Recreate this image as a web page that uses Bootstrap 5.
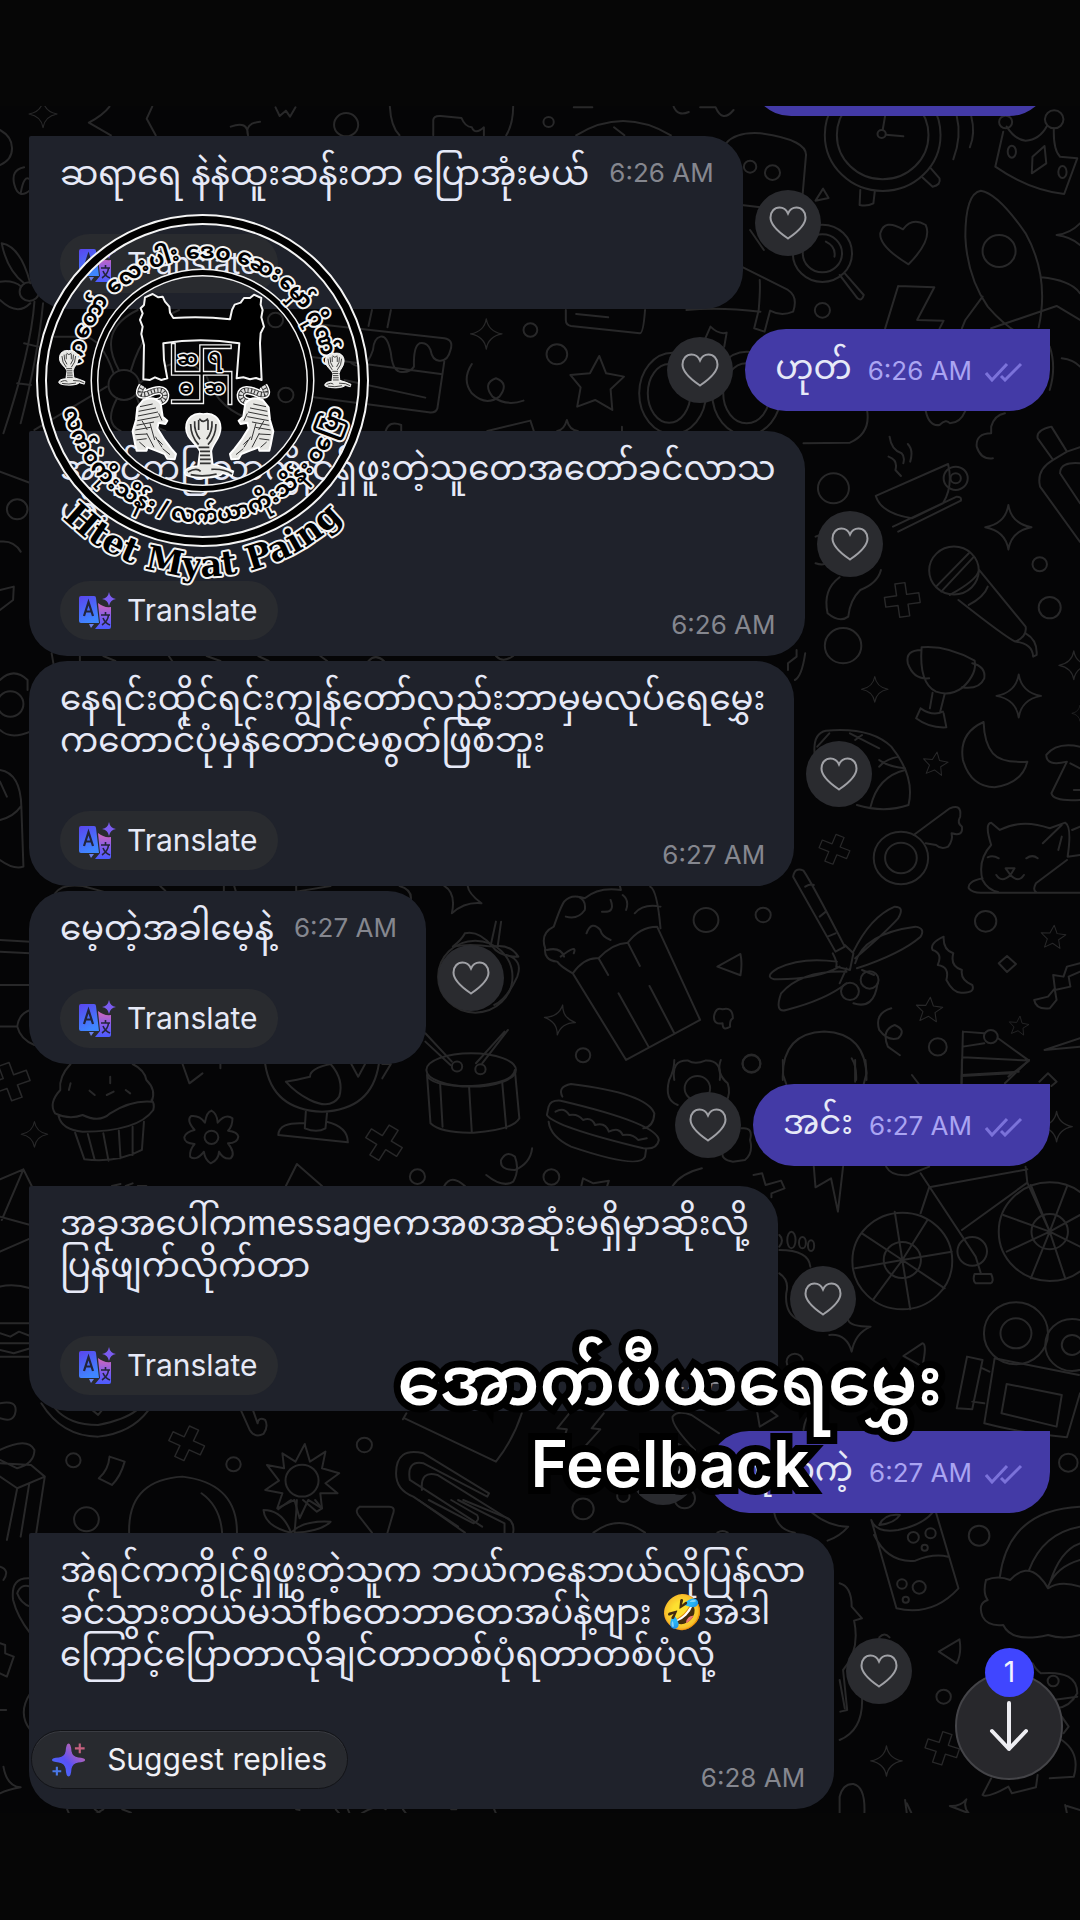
<!DOCTYPE html>
<html lang="my">
<head>
<meta charset="utf-8">
<meta name="viewport" content="width=device-width, initial-scale=1">
<title>Chat</title>
<link rel="stylesheet" href="https://cdn.jsdelivr.net/npm/bootstrap@5.3.0/dist/css/bootstrap.min.css">
<style>
:root{--ink:#e6e9f7;--in:#1f222b;--out:#433aa6;--chip:#292b2f;--latin:Inter,"Noto Sans",sans-serif;--my:Inter,"Noto Sans Myanmar","Padauk",serif}
body{background:#060606;color:var(--ink);font-family:var(--latin);padding:106px 0 0}
.chat{background:#050506;padding-bottom:4px}
.wall{z-index:0;left:0;top:0;width:100%;height:100%}
.wall *{vector-effect:non-scaling-stroke}
.thread{z-index:1;padding:0 30px 0 29px;gap:20px}
.run{gap:5px}
.msg{gap:12px}
.bub{background:var(--in);border-radius:38px;padding:16px 29px 16px 31px;white-space:nowrap}
.first{border-top-left-radius:2px}
.sent{background:var(--out);border-radius:41px 0 41px 41px;height:82px;padding:17px 27px 0 30px}
.cut{width:300px;margin-top:-72px}
.txt{font-family:var(--my);font-size:34px;line-height:42px;margin:0}
.l1{margin-bottom:40px}.l2{margin-bottom:50px}.l3{margin-bottom:59px}
.when{font-size:26px;line-height:42px;color:#85878f}
.sent .when{color:#aaa4f2;margin-right:13px}
.foot{height:59px}
.foot .when{line-height:30px}
.chip{background:var(--chip);color:var(--ink);border:0;border-radius:30px;height:59px;padding:0 20px 0 19px;gap:10px;font-size:30px}
.like{background:#2a2b2f;border:0;border-radius:50%;width:66px;height:66px;padding:0;flex:none}
.over{z-index:3}
.suggest{z-index:2;left:31px;bottom:24px;height:59px;width:317px;padding:0 20px;gap:22px;border-radius:30px;background:#282a2f;border:1px solid #121317;color:#f1f1f6;font-size:30px;white-space:nowrap;box-shadow:inset 0 1px 0 #3a3c42}
.down{z-index:2;right:17px;bottom:33px;width:108px;height:108px;border-radius:50%;background:#28282c;border:2px solid #444448;padding:0}
.unread{z-index:1;left:28px;top:-26px;width:49px;height:49px;border-radius:50%;background:#4046ff;color:#f2f2ff;font-size:28px;line-height:49px}
.emblem{left:30px;top:104px;width:346px;height:386px}
.caption{left:260px;right:0;top:1233px;font:600 68px/82px var(--my);color:#fff;-webkit-text-stroke:14px #000;paint-order:stroke fill;stroke-linejoin:round}
.caption span{font-size:64px}
</style>
<script src="https://cdn.jsdelivr.net/npm/bootstrap@5.3.0/dist/js/bootstrap.bundle.min.js"></script>
</head>
<body>
<svg width="0" height="0" class="position-absolute" aria-hidden="true">
<defs>
<linearGradient id="ga" x1="0" y1="1" x2="1" y2="0"><stop offset="0" stop-color="#3d7cff"/><stop offset=".45" stop-color="#5a50f5"/><stop offset="1" stop-color="#f0708f"/></linearGradient>
<linearGradient id="gb" x1="0" y1="0" x2="0" y2="1"><stop offset="0" stop-color="#d468b8"/><stop offset=".6" stop-color="#7a5cf0"/><stop offset="1" stop-color="#4a5cff"/></linearGradient>
<linearGradient id="gc" x1="0" y1="0" x2=".4" y2="1"><stop offset="0" stop-color="#5a44ee"/><stop offset="1" stop-color="#3f86ff"/></linearGradient>
<symbol id="heart" viewBox="0 0 38 34"><path d="M19 32.500C14 29 1.500 21 1.500 11.500C1.500 5.500 5.500 1.500 10.500 1.500C14.500 1.500 17.500 4 19 7.500C20.500 4 23.500 1.500 27.500 1.500C32.500 1.500 36.500 5.500 36.500 11.500C36.500 21 24 29 19 32.500Z" fill="none" stroke="#a0a1a6" stroke-width="2"/></symbol>
<symbol id="tr" viewBox="0 0 38 38"><path d="M2 4H15Q17 4 17 6L20 31H2Q0 31 0 29V6Q0 4 2 4Z" fill="url(#gc)"/><path d="M10 32H15L12 36Z" fill="#6b7ee8"/><path d="M19 11Q25 16 32 15V35Q32 37 30 37H16L21 31Z" fill="url(#gb)"/><path d="M5 24L9.500 10L14 24M6.500 19.500H12.500" fill="none" stroke="#22243a" stroke-width="2.200"/><path d="M22 23H31M26.500 20V23M23 33Q29 29 29.500 23M24 26Q26 31 31 33" fill="none" stroke="#22243a" stroke-width="1.600"/><path d="M30 0Q31 6 37 7Q31 8 30 14Q29 8 23 7Q29 6 30 0Z" fill="#7b5cf0"/></symbol>
<symbol id="ai" viewBox="0 0 34 34"><path d="M17 0Q19.500 0 20 8Q21 13.500 27 14.500Q34 15 34 17Q34 19 27 19.500Q21 20.500 20 26Q19.500 34 17 34Q14.500 34 14 26Q13 20.500 7 19.500Q0 19 0 17Q0 15 7 14.500Q13 13.500 14 8Q14.500 0 17 0Z" fill="url(#ga)"/><path d="M28.500 0V10M23.500 5H33.500" stroke="#c4607f" stroke-width="2.200"/><path d="M5 24V33M.500 28.500H9.500" stroke="#4a78e8" stroke-width="2.200"/></symbol>
<symbol id="ticks" viewBox="0 0 38 20"><path d="M1 11L7 18L22 2M16 14L20 18L36 2" fill="none" stroke="#7b72da" stroke-width="3"/></symbol>
<path id="spark" d="M0-24Q3-4 24 0Q3 4 0 24Q-3 4-24 0Q-3-4 0-24Z"/>
<path id="star" d="M0-24L7-8L24-7L11 4L15 21L0 12L-15 21L-11 4L-24-7L-7-8Z"/>
<path id="plus" d="M-7-24H7V-7H24V7H7V24H-7V7H-24V-7H-7Z"/>
<g id="cobra"><path d="M60 0C88-6 112 12 112 42C112 74 88 88 84 112L88 150L120 160L150 172L146 186L118 178Q110 190 64 192Q4 190 4 176Q6 158 44 156L50 112C36 84 8 74 8 42C8 12 32-6 60 0Z" fill="#e9e9e6" stroke="#fff" stroke-width="5"/><path d="M22 30Q22 66 46 92M98 30Q98 66 74 92M34 22Q32 54 50 76M86 22Q88 54 70 76M46 18V48M74 18V48M48 14Q60 30 74 14M46 100H78M50 112H80M50 124H80M50 136H82M50 148H82M14 174Q40 160 52 172M84 166Q124 164 146 180M22 182Q60 190 100 180" fill="none" stroke="#333" stroke-width="5"/></g>
<g id="tiger"><path d="M338 528Q318 560 350 552Q400 528 405 555Q406 576 370 578" fill="none" stroke="#fff" stroke-width="26"/><path d="M338 528Q318 560 350 552Q400 528 405 555Q406 576 370 578" fill="none" stroke="#333" stroke-width="17"/><path d="M338 528Q318 560 350 552Q400 528 405 555Q406 576 370 578" fill="none" stroke="#ddd" stroke-width="12" stroke-dasharray="7 3"/><path d="M340 570Q372 556 392 580L398 620L412 632L406 642L386 638L382 655L404 690L424 716L438 732L434 748L412 746L404 732L378 722L352 712L350 722L320 722L316 706L308 664L318 630L322 592Z" fill="#e6e6e3" stroke="#fff" stroke-width="6" stroke-linejoin="round"/><path d="M330 590L368 582M326 604L378 594M324 618L384 606M322 632L386 620M320 646L372 636M316 660L362 652M316 674L352 672M320 690L350 686M336 632L352 660M360 640L374 690M350 670L372 712M376 680L396 712M384 690L398 704M328 696L346 712M398 716L420 734M386 610L396 632" fill="none" stroke="#333" stroke-width="3"/></g>
</defs>
</svg>

<main class="chat position-relative overflow-hidden">
<svg class="wall position-absolute" viewBox="0 106 1080 1707" preserveAspectRatio="xMidYMin slice" fill="none" stroke="#282829" stroke-width="2" stroke-linejoin="round" stroke-linecap="round" aria-hidden="true">
<g transform="translate(0 90) scale(.3444 .3333)">
<use href="#spark" transform="translate(125 72) scale(1.700)"/><path d="M318 50Q300 75 258 98L322 136M442 50L426 86L452 136M670 110Q720 90 720 136M755 95Q710 100 720 136M800 52L812 78L830 62L842 80L858 52M1132 50Q1135 110 1160 136M1490 50Q1490 100 1470 136M1258 136V90Q1260 76 1280 78L1340 84Q1350 110 1370 112Q1380 136 1405 112V136M0 120Q35 140 35 175T0 225M70 232Q30 240 42 285T88 300M60 310Q70 250 88 270"/><circle cx="1005" cy="104" r="35"/>
<path d="M5 460Q60 470 88 580M5 460Q20 540 70 580M0 575Q40 570 62 590M0 630Q50 680 88 640M100 635Q90 780 10 1030M125 640Q110 800 60 1000M70 760L110 770M50 880L90 885"/><circle cx="85" cy="605" r="28"/>
<circle cx="360" cy="885" r="45"/><path d="M345 840Q280 720 400 660M380 842Q420 700 520 660M405 880Q520 780 580 840M340 925Q300 1000 350 1023M395 915Q420 1000 480 1023M130 740H230Q290 730 330 850M310 890L100 1020M600 860Q640 980 780 1000"/><circle cx="800" cy="690" r="22"/><circle cx="830" cy="915" r="22"/>
<path d="M900 700L1290 745Q1318 750 1308 780Q1300 815 1275 812Q1255 810 1250 780Q1240 755 1218 760Q1200 770 1202 830Q1190 850 1160 845Q1140 840 1135 790Q1125 735 1105 740Q1085 745 1083 780Q1060 850 1020 820M900 800L1280 852M1290 815L1270 955Q1265 970 1245 967L900 920M1000 870L1235 923M1080 660L1070 708M1135 660L1125 712"/><use href="#spark" transform="translate(1412 732) scale(1.900)"/><circle cx="1540" cy="720" r="20"/><path d="M1370 822Q1340 870 1370 910Q1410 950 1450 920Q1480 880 1440 865Q1400 880 1430 920Q1470 950 1520 932M1120 1023Q1130 990 1165 1005V1023M1415 1023L1540 992L1550 1023"/>
<circle cx="50" cy="1258" r="30"/><path d="M0 1145L90 1180M0 1355Q40 1350 60 1385M0 1500L40 1490L38 1530L0 1560"/>
</g>
<g transform="translate(540 90) scale(.3444 .3333)">
<path d="M98 52H152M388 50Q400 80 432 66M465 52H510Q530 100 562 60M105 136Q240 50 380 136M215 112L245 136"/><circle cx="25" cy="96" r="15"/>
<path d="M540 160Q570 125 640 130Q780 150 772 200L762 320M585 345L640 352M610 420L650 480M585 530L720 600Q750 620 735 665Q700 680 668 662L652 725L622 715L635 660Q640 600 638 570M425 660Q520 650 640 665M75 660V690Q75 705 90 708L290 730Q300 730 305 660M105 672L198 682"/><circle cx="610" cy="230" r="18"/><circle cx="675" cy="248" r="22"/>
<circle cx="995" cy="135" r="168"/><circle cx="995" cy="135" r="133"/><circle cx="992" cy="132" r="12"/><path d="M1002 78L995 120M1004 134L1055 139M930 300L928 345Q950 350 968 340L972 305M1110 262L1140 290Q1165 285 1160 265L1135 235M1210 78Q1225 140 1200 208M1252 78Q1265 130 1248 172"/>
<path d="M1355 110Q1380 150 1410 152Q1450 150 1472 108M1345 125L1322 230Q1420 300 1522 312L1560 205M1492 115Q1490 180 1510 200L1560 205M1465 168L1430 200L1428 250L1470 220Z"/><circle cx="1352" cy="96" r="19"/><circle cx="1493" cy="88" r="27"/><ellipse cx="1370" cy="185" rx="12" ry="18"/><ellipse cx="1517" cy="246" rx="12" ry="18"/>
<path d="M822 296L800 332L838 324Z"/><circle cx="820" cy="490" r="86"/><circle cx="820" cy="490" r="57"/><path d="M830 455Q860 470 855 500M870 555L922 625Q935 635 940 615L885 550"/>
<path d="M1070 523Q985 470 988 430Q1000 385 1054 418Q1080 380 1120 405Q1140 450 1070 523Z"/><path d="M1280 302Q1330 310 1410 430Q1480 560 1448 712M1280 302Q1235 310 1235 440Q1240 560 1300 650Q1350 710 1400 735M1285 620L1235 690L1225 715M1455 562Q1540 570 1568 610M1310 715L1500 648L1568 690"/><circle cx="1333" cy="483" r="48"/><path d="M1500 435Q1540 430 1568 400M1500 435Q1540 440 1568 465"/>
<path d="M1040 588L1145 592L1095 690L1172 692L1160 716M1040 588L1002 716"/><circle cx="820" cy="661" r="22"/>
<circle cx="49" cy="793" r="30"/><path d="M172 798L192 850L244 860L205 898L210 960L160 930L108 950L118 892L88 855L145 850Z"/><ellipse cx="385" cy="910" rx="97" ry="122"/><ellipse cx="375" cy="910" rx="62" ry="88"/><ellipse cx="600" cy="910" rx="100" ry="125"/><ellipse cx="600" cy="910" rx="68" ry="90"/><path d="M480 745L495 710Q520 735 542 728L535 770M950 963Q960 1030 900 1058L765 1060M1120 963Q1130 1010 1160 1005Q1180 985 1190 1000Q1220 1000 1235 963M1310 1030V1010Q1320 975 1350 970M1310 1030Q1265 1030 1268 1070Q1280 1110 1315 1105M1515 805Q1550 810 1568 830M1480 770Q1500 830 1480 900M50 1023Q70 1020 78 990Q85 1020 110 1023M238 1010V1023"/>
<circle cx="852" cy="1195" r="45"/><path d="M1015 1040Q1020 1080 1050 1090Q1060 1100 1055 1120M1068 1062Q1085 1080 1075 1115M1012 1100Q1040 1110 1032 1140L1048 1158M975 1218L1185 1122Q1200 1190 1170 1240L1080 1285Q990 1270 975 1218ZM1025 1310L1210 1220Q1225 1220 1222 1232L1040 1325"/><circle cx="1207" cy="1165" r="35"/><circle cx="1207" cy="1165" r="15"/>
<path d="M1445 1045Q1440 1020 1485 1010L1530 1085L1490 1110ZM1530 1085L1568 1072M1490 1110Q1440 1140 1452 1190L1568 1356M1510 1150Q1510 1115 1568 1120M1510 1150L1568 1240"/><use href="#spark" transform="translate(1360 1312) scale(2.800)"/><circle cx="1451" cy="1423" r="21"/><circle cx="1480" cy="1553" r="32"/><circle cx="1202" cy="1442" r="72"/><path d="M1150 1490L1245 1390M1165 1505L1260 1400M1190 1515Q1270 1470 1275 1440M1275 1440L1410 1610Q1415 1640 1380 1655Q1350 1640 1215 1530M1245 1545Q1290 1520 1300 1490M1410 1630Q1445 1650 1442 1695L1432 1700Q1430 1660 1380 1655"/><use href="#plus" transform="translate(1052 1530) rotate(-8) scale(2.100)"/><path d="M800 1340Q820 1330 838 1335M800 1420Q830 1430 845 1410M990 1440Q980 1480 930 1500Q900 1530 895 1580Q870 1600 835 1570Q820 1500 870 1462"/>
</g>
<g transform="translate(0 600) scale(.3444 .3333)">
<path d="M150 160L155 190M232 168V183M300 168L335 183M490 168L500 183M600 168L640 183M750 168L780 183M930 168L950 183M1070 183Q1090 160 1115 183M1440 168Q1460 190 1490 168M0 240Q40 200 80 240V270M0 390Q30 420 88 395M0 510Q60 520 62 620L68 800Q40 810 0 780M0 660Q40 650 60 620M0 545L20 590M0 1020L88 1025M0 1055L88 1060M0 1155H88M0 1280H50M50 1280Q55 1240 88 1230M50 1280Q60 1320 100 1335"/><circle cx="30" cy="312" r="38"/>
<path d="M160 880Q180 850 240 858L300 875M465 858L480 872M650 858V875M680 858L685 875M860 858V875L960 858M1160 858Q1200 870 1192 905M1290 858Q1325 880 1312 940Q1350 905 1398 910Q1360 880 1358 858"/>
<path d="M1440 965L1425 1035M1455 965L1445 1040M1350 1000Q1390 990 1430 1040Q1480 1030 1505 1070Q1450 1070 1430 1040M1350 1000Q1340 1020 1315 1040Q1360 1030 1430 1040M1470 1065Q1520 1080 1502 1130Q1470 1200 1435 1215"/><circle cx="1380" cy="1130" r="108"/>
<ellipse cx="1368" cy="1410" rx="130" ry="50"/><path d="M1235 1300L1312 1385M1235 1325L1308 1395M1475 1290L1400 1390M1465 1295L1382 1390"/><circle cx="1327" cy="1400" r="15"/><circle cx="1395" cy="1408" r="15"/>
</g>
<g transform="translate(540 600) scale(.3444 .3333)">
<circle cx="880" cy="137" r="53"/><path d="M745 150V170L720 190V210M770 160Q760 230 740 240"/><use href="#spark" transform="translate(972 268) scale(1.600)"/><use href="#spark" transform="translate(1390 288) scale(2.700)"/><use href="#spark" transform="translate(1550 196) scale(1.800)"/><use href="#spark" transform="translate(1568 340) scale(1)"/>
<path d="M1108 142Q1180 135 1262 182Q1270 220 1228 262Q1190 290 1150 275Q1100 250 1108 142ZM1108 150Q1060 150 1068 190Q1085 240 1130 235M1255 190Q1295 200 1290 235Q1275 270 1225 262M1140 278L1132 325M1175 282L1162 335M1105 325Q1140 350 1170 335M1105 325L1092 355Q1130 385 1180 382L1172 340"/>
<path d="M798 470Q790 400 830 392Q960 380 1020 440Q1090 530 1070 615Q1000 640 920 615M985 480Q1010 500 1060 505M960 620Q980 530 1060 510M1040 470Q1000 480 985 500M805 440L840 400M900 400L985 445M915 420L935 405"/>
<use href="#star" transform="translate(1148 492) rotate(8) scale(1.500)"/><path d="M1288 366Q1215 400 1228 480Q1250 560 1320 562Q1400 550 1415 485Q1340 490 1315 460Q1290 430 1288 366ZM1568 440Q1500 425 1470 465Q1470 500 1530 485L1485 580Q1490 605 1568 600M1540 490L1568 505M1550 570H1568"/>
<circle cx="1048" cy="774" r="79"/><circle cx="1048" cy="774" r="46"/><path d="M1085 705L1190 625Q1225 610 1220 650Q1210 670 1225 680Q1230 710 1195 700Q1200 720 1185 740Q1165 750 1150 735L1120 730"/><use href="#plus" transform="translate(855 748) rotate(22) scale(1.800)"/>
<path d="M1310 735Q1290 670 1310 668L1335 690Q1400 655 1480 685L1525 668Q1545 680 1532 770L1568 765M1310 735Q1270 780 1285 840Q1300 870 1330 876M1285 835Q1240 845 1245 865Q1255 878 1280 878H1568M1460 730L1515 675M1505 750L1515 710M1530 780L1440 850Q1430 870 1440 876M1300 772Q1315 765 1332 775M1412 775Q1430 762 1445 775M1352 805H1378L1366 825ZM1325 825Q1340 850 1366 825Q1390 850 1405 825M1545 690L1568 680"/>
<path d="M95 1120Q60 1100 50 1085Q10 1080 15 1045Q0 1000 40 980Q60 920 70 905Q90 880 130 895Q170 860 235 870L232 858M350 985Q340 870 320 860M95 1120Q130 1070 170 1075Q210 1030 255 1028Q290 980 340 980L465 1260L250 1380ZM170 1075L198 1125M255 1028L290 1098M228 1180L315 1340M318 1158L390 1300M20 1050Q60 1040 70 1070M60 1070Q110 1030 98 1060M135 1000Q150 960 175 990Q180 1010 205 1020M180 935Q220 940 205 900M240 885Q260 900 250 930M275 940Q300 910 350 920M75 950Q110 960 130 930Q135 900 110 890"/>
<circle cx="482" cy="960" r="36"/><circle cx="648" cy="945" r="22"/><path d="M735 830Q740 800 765 812Q790 850 885 1040L858 1055ZM770 860Q785 850 795 855M812 950L830 935M835 1010L858 1000M850 1060Q865 1090 860 1100L900 1110L910 1060L885 1035M862 1085Q760 1070 690 1105Q650 1130 680 1138Q800 1140 870 1100M890 1115Q760 1110 700 1180Q680 1240 715 1230Q830 1200 890 1150M910 1055Q960 950 1030 920Q1060 920 1040 955Q1000 1000 915 1075M915 1090Q940 1000 1090 980Q1120 985 1105 1010Q1050 1060 920 1105M870 1150L890 1105M935 1110L970 1125M910 1210Q970 1230 980 1150"/><circle cx="900" cy="1174" r="26"/><circle cx="957" cy="1140" r="26"/>
<path d="M582 1062Q588 1090 582 1126L515 1100ZM505 1250Q510 1220 530 1228Q560 1220 560 1255Q550 1260 552 1280Q530 1295 530 1270Q505 1275 505 1250"/><circle cx="125" cy="1366" r="21"/><circle cx="614" cy="1390" r="26"/><use href="#spark" transform="translate(58 1260) rotate(10) scale(1.900)"/>
<circle cx="1294" cy="964" r="31"/><use href="#star" transform="translate(1490 1012) rotate(5) scale(1.500)"/><use href="#star" transform="translate(1130 1230) rotate(5) scale(1.600)"/><use href="#star" transform="translate(1390 1278) rotate(8) scale(1.200)"/><path d="M1356 1068L1382 1092L1356 1116L1332 1090ZM1172 1010Q1130 1030 1140 1050Q1170 1060 1155 1095Q1190 1100 1180 1140Q1200 1180 1225 1178Q1265 1180 1255 1155Q1220 1140 1225 1110Q1190 1100 1200 1060Q1170 1050 1172 1010ZM1568 1090L1530 1100L1520 1130L1490 1125L1495 1165L1475 1190L1435 1200Q1440 1230 1480 1225L1500 1200L1495 1170L1540 1160L1535 1130L1568 1115M1020 1225Q970 1240 985 1290Q1010 1325 1040 1315Q1065 1290 1030 1275Q990 1290 1010 1340L1045 1366"/><circle cx="1155" cy="1341" r="26"/><circle cx="1309" cy="1310" r="20"/><path d="M1228 1295L1290 1300M1330 1315L1420 1382L1360 1430M1228 1295L1224 1450M1228 1340L1290 1330M1228 1372L1420 1382M1224 1428L1370 1420M1465 1350L1568 1315M1465 1350L1568 1340"/>
<path d="M705 1440Q700 1300 825 1295Q950 1300 948 1440M905 1375Q920 1400 918 1440M390 1440Q380 1380 430 1382Q450 1395 480 1382Q530 1380 522 1440"/>
</g>
<g transform="translate(0 1060) scale(.3444 .3333)">
<use href="#plus" transform="translate(30 65) rotate(-20) scale(2.300)"/><path d="M205 12Q170 50 175 90Q140 130 160 160Q200 180 240 165Q290 190 320 160Q380 120 440 125Q455 90 425 60Q420 30 385 12M170 168Q180 210 240 215Q400 215 445 150Q450 130 440 120M218 218L245 298Q340 310 412 270L418 185M255 222L275 300M300 220L315 302M345 212L350 295M385 200L385 285M260 92L275 105M310 105L330 95M365 90L378 100M320 70V50M200 90L205 70"/><use href="#spark" transform="translate(100 223) scale(1.600)"/><path d="M530 12L550 70L588 40M640 12V25"/><circle cx="614" cy="232" r="20"/><path d="M614 152Q630 160 632 188Q655 160 675 175Q675 200 662 212Q690 215 692 230Q690 250 662 250Q685 280 670 295Q650 300 636 275Q635 300 612 310Q595 300 592 275Q570 305 552 290Q550 270 565 252Q535 250 535 232Q540 215 565 210Q540 180 555 168Q580 165 595 188Q600 155 614 152"/>
<path d="M770 12Q790 150 935 155Q1080 150 1100 12M1110 12L1135 12L1110 55M830 65Q860 60 900 50Q900 25 960 12Q1000 60 985 110Q960 150 900 120Q860 100 830 65M1020 12L1040 50L1060 12M888 155L885 205Q920 220 945 205L950 155M885 190Q810 185 808 225L1010 247Q1010 200 948 185"/><use href="#plus" transform="translate(1115 248) rotate(32) scale(2.200)"/>
<path d="M1240 45Q1250 80 1370 78Q1490 70 1495 30M1240 45L1250 190Q1280 220 1375 218Q1490 210 1508 175L1495 30M1278 72L1285 200M1362 80L1370 218M1458 65L1470 205M1545 265Q1540 310 1495 330Q1450 330 1455 300Q1470 270 1495 290Q1510 330 1490 365Q1460 385 1412 345"/><circle cx="1212" cy="350" r="22"/><path d="M830 378L862 312L935 378M1290 378Q1310 340 1350 378M325 378L350 372M365 378L385 370M400 378H425M0 358L68 328L92 378M68 328L5 480M0 470L88 495M0 575L88 535M0 680Q40 670 88 685M0 790H88M0 820L30 830L55 815L88 828M0 850H88M0 870L40 880L88 865M0 890H88M0 1030Q50 1020 45 1055Q40 1090 0 1075"/>
<path d="M120 1030Q180 1130 285 1130Q380 1120 430 1052M160 1045Q200 1095 285 1095Q360 1080 395 1052M270 1052L285 1065L295 1052M700 1052L725 1110Q740 1135 765 1122Q780 1100 770 1080Q750 1070 748 1090L735 1052"/><use href="#plus" transform="translate(542 1150) rotate(25) scale(2.100)"/><circle cx="1058" cy="1155" r="22"/><circle cx="213" cy="1201" r="21"/><circle cx="678" cy="1213" r="21"/><path d="M318 1190L362 1205Q350 1250 325 1275L287 1255Q315 1230 318 1190M0 1170Q80 1130 100 1170Q100 1210 50 1225L0 1200M0 1250L50 1285L130 1250L105 1420M50 1285L20 1440M85 1270L60 1430M0 1210L90 1215L130 1250"/>
<circle cx="877" cy="1262" r="48"/><path d="M885 1152L900 1205L945 1175L935 1225L985 1240L945 1270L980 1300L930 1300L935 1345L895 1320L870 1375L855 1320L805 1345L820 1300L770 1290L810 1262L775 1215L825 1225L820 1180L858 1205ZM375 1420Q370 1260 530 1250Q690 1270 688 1420M585 1300Q640 1340 645 1420M1175 1075L1440 1205Q1490 1140 1515 1060M1180 1060L1170 1078M1150 1240Q1150 1160 1230 1180L1420 1300L1415 1310L1230 1210Q1180 1200 1190 1260L1400 1400M1225 1290Q1220 1230 1270 1245L1480 1380M1150 1240Q1150 1290 1200 1310L1330 1400"/>
</g>
<g transform="translate(540 1060) scale(.3444 .3333)">
<path d="M65 110Q50 80 90 72Q310 100 332 160Q330 200 300 205M25 140Q30 120 60 122Q340 190 345 240Q340 270 300 265Q40 200 20 165ZM25 185Q30 230 90 260Q290 330 305 290L308 268M45 155Q70 140 85 165Q110 160 125 180Q150 170 160 195Q190 185 200 215Q230 200 240 225Q270 220 285 240L310 235M390 0Q390 30 375 60Q360 120 400 135M525 0Q510 40 545 70Q555 100 540 125"/><circle cx="457" cy="85" r="37"/><circle cx="614" cy="12" r="26"/><path d="M705 0L706 45L715 72M945 0L948 40L940 72M915 0V65M1225 0L1224 72M1420 0L1350 70M1224 45L1390 35M1080 45L1100 72M1450 65L1475 40L1500 65L1485 78M585 205Q620 200 610 240Q620 280 595 300L560 305Q525 300 530 275"/><use href="#spark" transform="translate(1500 200) scale(1.900)"/>
<circle cx="33" cy="351" r="23"/><path d="M120 378L125 355L155 370L200 362L195 378M385 378Q410 340 470 325M620 345L645 340L655 375L700 362L710 385L672 400V412M795 320L800 382L845 355L865 455L880 320"/>
<circle cx="1052" cy="603" r="145"/><circle cx="1052" cy="600" r="54"/><circle cx="1480" cy="515" r="148"/><circle cx="1480" cy="515" r="53"/><circle cx="1255" cy="574" r="43"/><path d="M1052 600L1030 455M1052 600L1125 480M1052 600L1195 575M1052 600L1175 685M1052 600L1075 748M1052 600L968 718M1052 600L915 625M1052 600L935 520M1480 515L1425 375M1480 515L1530 380M1480 515L1345 465M1480 515L1355 575M1480 515L1425 655M1480 515L1525 655M1480 515L1568 560M1480 515L1568 465M1105 340L1265 590L1280 640M1105 460L1130 382L1415 328M1225 510L1415 368L1410 320M1415 368L1480 515M1005 320Q1020 350 1070 345L1130 320M1262 642H1310Q1320 665 1308 670H1265Q1255 660 1262 642"/>
<ellipse cx="730" cy="540" rx="12" ry="25"/><ellipse cx="762" cy="548" rx="10" ry="17"/><ellipse cx="787" cy="557" rx="9" ry="16"/><path d="M695 525Q710 540 695 560M695 570Q780 570 785 620M695 640Q725 660 715 700Q710 760 750 780"/><path d="M840 825Q890 820 905 875Q915 820 960 800Q900 800 895 780M1110 850Q1125 850 1110 920L1055 888Z"/><circle cx="740" cy="905" r="24"/>
<circle cx="1382" cy="820" r="93"/><circle cx="1382" cy="820" r="45"/><circle cx="1545" cy="855" r="78"/><circle cx="1545" cy="855" r="30"/><path d="M1320 895L1565 945M1320 895L1290 1090Q1400 1120 1530 1132L1568 1000M1355 972L1515 1005L1500 1100L1340 1060ZM1240 890L1285 900L1255 1048L1210 1045ZM1285 925L1305 935M1255 1025L1290 1030"/>
<path d="M85 1060L50 1105L78 1108L65 1150M185 1060L150 1105L175 1108L130 1160M385 1070Q400 1050 440 1065L520 1120M385 1070Q380 1095 450 1170M630 1052L638 1100L690 1068L670 1052M765 1110Q770 1070 790 1060"/><circle cx="1534" cy="1208" r="27"/><circle cx="125" cy="1347" r="31"/><circle cx="242" cy="1308" r="18"/><circle cx="420" cy="1315" r="30"/>
</g>
<g transform="translate(0 1500) scale(.3444 .3333)">
<circle cx="251" cy="58" r="36"/><path d="M808 28Q830 10 845 0M855 98Q860 50 862 0M845 98Q820 30 765 30Q770 80 845 98Q880 60 960 65Q930 95 855 98M880 0L920 35L935 25L915 0M1045 20H1130Q1150 20 1140 45L1125 98M1045 20Q1030 30 1040 45L1080 98M1215 0L1350 98M1245 0L1375 70Q1395 60 1385 45L1310 0M1345 0L1475 55Q1495 70 1490 98M1330 0L1465 70V98"/>
<path d="M0 200Q30 210 10 240M88 235Q30 230 38 300Q50 350 88 400M50 280Q60 250 88 260M88 320Q60 310 50 280M0 430L15 435V460L40 470L20 530L0 520M0 630H18M88 580Q50 640 88 690M0 880Q20 870 60 862Q20 860 10 800M195 928L200 940M275 928L290 940M300 928L280 940M355 928L380 938M870 930L860 928M975 928L985 940M1010 928L1015 940M1050 940Q1100 910 1120 928M1170 928L1180 942M1310 928H1325M1435 928L1440 940"/>
</g>
<g transform="translate(540 1500) scale(.3444 .3333)">
<path d="M155 98Q230 40 305 98M515 98Q530 88 545 98M680 38Q690 90 740 98M790 38Q840 80 895 80Q870 110 835 122M962 60L1035 325Q1140 350 1215 265L1150 38M962 60Q975 100 1040 90Q1110 75 1140 38M970 105Q1010 190 1090 182Q1140 160 1185 170M985 75Q1000 40 1045 45Q1030 70 985 75"/><circle cx="1084" cy="112" r="16"/><circle cx="1134" cy="100" r="15"/><circle cx="1117" cy="143" r="9"/><circle cx="1051" cy="252" r="14"/><circle cx="1101" cy="262" r="19"/><circle cx="1062" cy="299" r="9"/><circle cx="1275" cy="107" r="30"/>
<path d="M1335 232Q1360 30 1568 20M1420 210Q1460 100 1568 80M1475 260Q1500 200 1568 180M1480 250Q1510 150 1568 130M1295 240Q1330 225 1365 240Q1410 190 1450 230Q1465 245 1475 265Q1510 240 1568 260M1295 240Q1285 280 1300 300Q1270 310 1285 350Q1300 380 1345 375Q1370 430 1475 405Q1520 420 1568 405"/>
<path d="M870 250Q905 260 905 320L935 355L912 362Q930 450 880 510L892 630L872 635M870 540L885 625M935 590Q940 690 870 720M985 412Q1000 395 1015 412M1218 418Q1225 460 1210 490L1158 455ZM870 940V890Q880 850 910 852Q945 860 942 940M1060 900L1065 940M1065 910L1078 938M1525 915L1530 940M1530 918L1568 930"/><circle cx="1172" cy="590" r="21"/><use href="#spark" transform="translate(1006 783) scale(1.900)"/><use href="#plus" transform="translate(1168 745) rotate(18) scale(2)"/><path d="M1190 918Q1220 920 1238 898Q1228 920 1245 940L1215 928Z"/>
<path d="M1430 490Q1440 510 1455 520Q1560 510 1560 580Q1540 620 1500 625M1490 600L1560 590M1515 650L1535 680L1520 700M1515 720Q1570 760 1550 830L1480 835M1310 835L1285 885Q1300 895 1360 860L1370 880L1440 862L1445 825"/><circle cx="1490" cy="543" r="16"/>
</g>
</svg>

<div class="thread position-relative d-flex flex-column">
<div class="sent cut ms-auto"></div>

<div class="msg d-flex align-items-center">
<div class="bub first"><div class="d-flex l1"><p class="txt me-3">ဆရာရေ နဲနဲထူးဆန်းတာ ပြောအုံးမယ်</p><time class="when ms-1">6:26 AM</time></div>
<div class="foot d-flex align-items-end"><button class="chip d-flex align-items-center" type="button"><svg width="38" height="38"><use href="#tr"/></svg>Translate</button></div></div>
<button class="like" type="button" aria-label="Like"><svg width="38" height="34"><use href="#heart"/></svg></button>
</div>

<div class="msg d-flex align-items-center justify-content-end">
<button class="like" type="button" aria-label="Like"><svg width="38" height="34"><use href="#heart"/></svg></button>
<div class="sent d-flex"><p class="txt me-3">ဟုတ်</p><time class="when mt-1">6:26 AM</time><svg class="mt-3" width="38" height="20"><use href="#ticks"/></svg></div>
</div>

<div class="run d-flex flex-column">
<div class="msg d-flex align-items-center">
<div class="bub first"><p class="txt l2">အဲရင်ကပြသာကွိုင်ရှိဖူးတဲ့သူတေအတော်ခင်လာသ<br>ယ်း</p>
<div class="foot d-flex align-items-end justify-content-between"><button class="chip d-flex align-items-center" type="button"><svg width="38" height="38"><use href="#tr"/></svg>Translate</button><time class="when">6:26 AM</time></div></div>
<button class="like" type="button" aria-label="Like"><svg width="38" height="34"><use href="#heart"/></svg></button>
</div>
<div class="msg d-flex align-items-center">
<div class="bub"><p class="txt l2">နေရင်းထိုင်ရင်းကျွန်တော်လည်းဘာမှမလုပ်ရေမွှေး<br>ကတောင်ပုံမှန်တောင်မစွတ်ဖြစ်ဘူး</p>
<div class="foot d-flex align-items-end justify-content-between"><button class="chip d-flex align-items-center" type="button"><svg width="38" height="38"><use href="#tr"/></svg>Translate</button><time class="when">6:27 AM</time></div></div>
<button class="like" type="button" aria-label="Like"><svg width="38" height="34"><use href="#heart"/></svg></button>
</div>
<div class="msg d-flex align-items-center">
<div class="bub"><div class="d-flex l1"><p class="txt me-3">မေ့တဲ့အခါမေ့နဲ့</p><time class="when ms-1">6:27 AM</time></div>
<div class="foot d-flex align-items-end"><button class="chip d-flex align-items-center" type="button"><svg width="38" height="38"><use href="#tr"/></svg>Translate</button></div></div>
<button class="like" type="button" aria-label="Like"><svg width="38" height="34"><use href="#heart"/></svg></button>
</div>
</div>

<div class="msg d-flex align-items-center justify-content-end">
<button class="like" type="button" aria-label="Like"><svg width="38" height="34"><use href="#heart"/></svg></button>
<div class="sent d-flex"><p class="txt me-3">အင်း</p><time class="when mt-1">6:27 AM</time><svg class="mt-3" width="38" height="20"><use href="#ticks"/></svg></div>
</div>

<div class="msg d-flex align-items-center">
<div class="bub first"><p class="txt l2">အခုအပေါ်ကmessageကအစအဆုံးမရှိမှာဆိုးလို့<br>ပြန်ဖျက်လိုက်တာ</p>
<div class="foot d-flex align-items-end justify-content-between"><button class="chip d-flex align-items-center" type="button"><svg width="38" height="38"><use href="#tr"/></svg>Translate</button><time class="when">6:27 AM</time></div></div>
<button class="like" type="button" aria-label="Like"><svg width="38" height="34"><use href="#heart"/></svg></button>
</div>

<div class="msg d-flex align-items-center justify-content-end">
<button class="like" type="button" aria-label="Like"><svg width="38" height="34"><use href="#heart"/></svg></button>
<div class="sent d-flex"><p class="txt me-3">ဟုတ်ကဲ့</p><time class="when mt-1">6:27 AM</time><svg class="mt-3" width="38" height="20"><use href="#ticks"/></svg></div>
</div>

<div class="msg d-flex align-items-center">
<div class="bub first"><p class="txt l3">အဲရင်ကကွိုင်ရှိဖူးတဲ့သူက ဘယ်ကနေဘယ်လိုပြန်လာ<br>ခင်သွားတယ်မသိfbတေဘာတေအပ်နဲ့ဗျား 🤣အဲဒါ<br>ကြောင့်ပြောတာလိုချင်တာတစ်ပုံရတာတစ်ပုံလို့</p>
<div class="foot d-flex align-items-end justify-content-end"><time class="when">6:28 AM</time></div></div>
<button class="like" type="button" aria-label="Like"><svg width="38" height="34"><use href="#heart"/></svg></button>
</div>
</div>

<button class="suggest position-absolute d-flex align-items-center" type="button"><svg width="34" height="34"><use href="#ai"/></svg>Suggest replies</button>
<button class="down position-absolute" type="button" aria-label="Scroll to newest message"><span class="unread position-absolute">1</span><svg width="40" height="52" viewBox="0 0 40 52" fill="none" stroke="#ededf2" stroke-width="4" stroke-linecap="round" stroke-linejoin="round"><path d="M20 3V49M3 31L20 49L37 31"/></svg></button>

<svg class="emblem over position-absolute" viewBox="30 210 346 386" role="img" aria-label="Htet Myat Paing">
<defs><path id="arcTop" d="M80.500 380.500A122 122 0 0 1 324.500 380.500"/><path id="arcBot" d="M60.500 380.500A142 142 0 0 0 344.500 380.500"/><path id="arcName" d="M6.500 380.500A196 196 0 0 0 398.500 380.500"/></defs>
<g fill="none"><circle cx="202.500" cy="380.500" r="161" stroke="#f4f4f4" stroke-width="11"/><circle cx="202.500" cy="380.500" r="161" stroke="#000" stroke-width="7"/><circle cx="202.500" cy="380.500" r="108" stroke="#f4f4f4" stroke-width="8"/><circle cx="202.500" cy="380.500" r="108" stroke="#000" stroke-width="5"/></g>
<g fill="#000" stroke="#f4f4f4" stroke-width="4" stroke-linejoin="round" paint-order="stroke" style="font-family:var(--my);font-weight:700" text-anchor="middle">
<text font-size="22"><textPath href="#arcTop" startOffset="50%">ကတော် လေးပါး ဒေဝ ဆေးမှော် ဂိုဏ်း</textPath></text>
<text font-size="22"><textPath href="#arcBot" startOffset="50%">လက်ဝဲကိုးသိန်း / လက်ယာကိုးသိန်း ဝပြော</textPath></text>
<text font-size="34" style="font-family:'DejaVu Serif',serif"><textPath href="#arcName" startOffset="50%">Htet Myat Paing</textPath></text>
</g>
<g transform="translate(30 210) scale(.3333)">
<path d="M345 262L368 252L385 262L398 260L405 275L418 290L420 308L430 324Q520 318 600 328L606 300L614 284L632 278L642 264L660 264L672 254L694 264L692 284L698 300L694 322L702 350L692 370L690 400L695 510L678 504L660 508L640 502L620 505L628 400Q510 382 400 400L402 450L412 505L394 510L375 502L360 510L340 508L342 405L334 372L338 350L330 330L338 310L332 295L342 285Z" fill="#000" stroke="#f4f4f4" stroke-width="6" stroke-linejoin="round"/>
<g fill="none" stroke-linecap="square"><path d="M515 575V410H598M430 490H600V578M515 575H430M430 490V406" stroke="#f4f4f4" stroke-width="15"/><path d="M515 575V410H598M430 490H600V578M515 575H430M430 490V406" stroke="#000" stroke-width="7"/></g>
<g fill="#000" stroke="#f4f4f4" stroke-width="9" stroke-linejoin="round" paint-order="stroke" font-size="56" style="font-family:var(--my);font-weight:700" text-anchor="middle"><text x="473" y="464">ဆ</text><text x="555" y="460">ရ</text><text x="468" y="552">ဓ</text><text x="555" y="552">ဆ</text></g>
<use href="#tiger"/><use href="#tiger" transform="translate(1038 0) scale(-1 1)"/>
<use href="#cobra" transform="translate(460 612)"/>
<use href="#cobra" transform="translate(84 422) scale(.54)"/><use href="#cobra" transform="translate(882 430) scale(.54)"/>
</g>
</svg>
<div class="caption over position-absolute text-center">အောက်ပီယရေမွှေး<br><span>Feelback</span></div>
</main>
</body>
</html>
